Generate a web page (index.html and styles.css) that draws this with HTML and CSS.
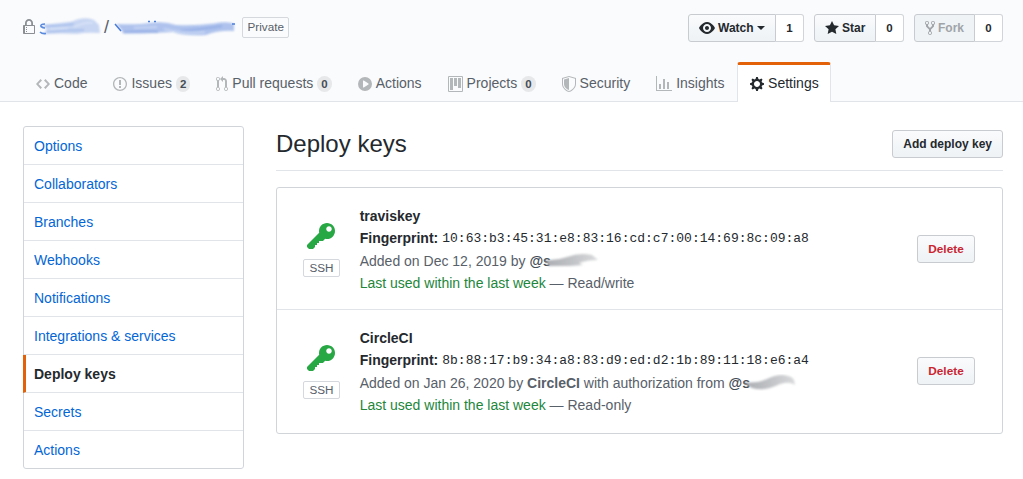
FILE: index.html
```html
<!DOCTYPE html>
<html lang="en">
<head>
<meta charset="utf-8">
<title>Deploy keys</title>
<link rel="stylesheet" href="styles.css">
</head>
<body>
<header class="repohead">
  <div class="repohead-top">
    <h1 class="repo-title">
      <svg class="lock" width="12" height="16" viewBox="0 0 12 16"><path d="M4 13H3v-1h1v1zm8-6v7c0 .55-.45 1-1 1H1c-.55 0-1-.45-1-1V7c0-.55.45-1 1-1h1V4c0-2.2 1.8-4 4-4s4 1.8 4 4v2h1c.55 0 1 .45 1 1zM3.8 6h4.41V4c0-1.22-.98-2.2-2.2-2.2-1.22 0-2.2.98-2.2 2.2v2H3.8zM11 7H2v7h9V7zM4 8H3v1h1V8zm0 2H3v1h1v-1z"/></svg>
      <svg class="owner-smudge" width="64" height="24" viewBox="0 0 64 24">
        <defs>
          <filter id="soft"><feGaussianBlur stdDeviation=".9"/></filter>
          <filter id="crisp"><feGaussianBlur stdDeviation=".5"/></filter>
          <linearGradient id="gray"><stop offset="0" stop-color="#a9acb1"/><stop offset=".6" stop-color="#c4c6c9"/><stop offset="1" stop-color="#d9dadc"/></linearGradient>
        </defs>
        <g filter="url(#soft)">
          <path fill="#c8d6f3" d="M5 10Q20 8 34 6.500Q47 1 56 5L61 10L62 18Q48 17 39 19Q24 18 5 19Q9 16 8 13Z"/>
          <path fill="none" stroke="#a9c0ec" stroke-width="2" d="M9 17Q28 15 46 15M6 11Q25 11 36 9"/>
          <path fill="none" stroke="#dbe5f8" stroke-width="1.500" d="M36 12Q47 7 55 8M12 14L30 13"/>
        </g>
        <path filter="url(#crisp)" fill="none" stroke="#5a8ae0" stroke-width="1.600" d="M7 9Q2 9 3 11.500Q5 13 7 13M2 17Q4 19 8 18.500"/>
      </svg>
      <span class="slash">/</span>
      <svg class="repo-smudge" width="124" height="24" viewBox="0 0 124 24">
        <g filter="url(#soft)">
          <path fill="#aec2ed" d="M2 9Q24 10 36 8Q50 6 62 10Q82 11 100 8.500Q114 6 120 9V16Q105 15 92 20Q70 21 59 17L28 18.500H9Q8 14 2 9Z"/>
          <path fill="none" stroke="#94aee5" stroke-width="2" d="M10 17Q30 16 44 17M66 16Q90 14 108 11"/>
          <path fill="none" stroke="#c6d5f4" stroke-width="2" d="M20 13L43 12M50 14Q70 19 91 17"/>
        </g>
        <path filter="url(#crisp)" fill="none" stroke="#4a7edc" stroke-width="1.500" d="M1 9L7 16M34 6.500h2M40 6.500h2M118 9h3"/>
      </svg>
      <span class="label private">Private</span>
    </h1>
    <div class="actions">
      <div class="btn-group"><button class="btn btn-watch"><svg width="16" height="16" viewBox="0 0 16 16"><path d="M8.06 2C3 2 0 8 0 8s3 6 8.06 6C13 14 16 8 16 8s-3-6-7.94-6zM8 12c-2.2 0-4-1.78-4-4 0-2.2 1.8-4 4-4 2.22 0 4 1.8 4 4 0 2.22-1.78 4-4 4zm2-4c0 1.11-.89 2-2 2-1.11 0-2-.89-2-2 0-1.11.89-2 2-2 1.11 0 2 .89 2 2z"/></svg>Watch<span class="caret"></span></button><a class="count">1</a></div>
      <div class="btn-group"><button class="btn btn-star"><svg width="14" height="16" viewBox="0 0 14 16"><path d="M14 6l-4.9-.64L7 1 4.9 5.36 0 6l3.6 3.26L2.67 14 7 11.67 11.33 14l-.93-4.74L14 6z"/></svg>Star</button><a class="count">0</a></div>
      <div class="btn-group"><button class="btn btn-fork"><svg width="10" height="16" viewBox="0 0 10 16"><path d="M8 1a1.993 1.993 0 00-1 3.72V6L5 8 3 6V4.720A1.993 1.993 0 002 1a1.993 1.993 0 00-1 3.720V6.500l3 3v1.780A1.993 1.993 0 005 15a1.993 1.993 0 001-3.720V9.500l3-3V4.720A1.993 1.993 0 008 1zM2 4.200C1.340 4.200.8 3.650.8 3c0-.65.55-1.200 1.200-1.200.65 0 1.200.55 1.200 1.200 0 .65-.55 1.200-1.200 1.200zm3 10c-.66 0-1.200-.55-1.200-1.200 0-.65.55-1.200 1.200-1.200.65 0 1.200.55 1.200 1.200 0 .65-.55 1.200-1.200 1.200zm3-10c-.66 0-1.200-.55-1.200-1.200 0-.65.55-1.200 1.200-1.200.65 0 1.200.55 1.200 1.200 0 .65-.55 1.200-1.200 1.200z"/></svg>Fork</button><a class="count">0</a></div>
    </div>
  </div>
  <nav class="tabs">
    <a class="tab"><svg width="14" height="16" viewBox="0 0 14 16"><path d="M9.500 3L8 4.500 11.500 8 8 11.500 9.500 13 14 8 9.500 3zm-5 0L0 8l4.500 5L6 11.500 2.500 8 6 4.500 4.500 3z"/></svg>Code</a>
    <a class="tab"><svg width="14" height="16" viewBox="0 0 14 16"><path d="M7 2.300c3.140 0 5.700 2.560 5.700 5.700s-2.560 5.700-5.700 5.700A5.710 5.710 0 011.300 8c0-3.140 2.560-5.700 5.700-5.700zM7 1C3.140 1 0 4.140 0 8s3.140 7 7 7 7-3.140 7-7-3.140-7-7-7zm1 3H6v5h2V4zm0 6H6v2h2v-2z"/></svg>Issues<span class="counter">2</span></a>
    <a class="tab"><svg width="12" height="16" viewBox="0 0 12 16"><path d="M11 11.280V5c-.03-.78-.34-1.470-.94-2.060C9.460 2.350 8.780 2.030 8 2H7V0L4 3l3 3V4h1c.27.02.48.11.69.31.21.2.3.42.31.69v6.280A1.993 1.993 0 0010 15a1.993 1.993 0 001-3.720zm-1 2.920c-.66 0-1.200-.55-1.200-1.200 0-.65.55-1.200 1.200-1.200.65 0 1.200.55 1.200 1.200 0 .65-.55 1.200-1.200 1.200zM4 3c0-1.110-.89-2-2-2a1.993 1.993 0 00-1 3.720v6.560A1.993 1.993 0 002 15a1.993 1.993 0 001-3.720V4.720c.59-.34 1-.98 1-1.720zm-.8 10c0 .66-.55 1.200-1.200 1.200-.65 0-1.200-.55-1.200-1.200 0-.65.55-1.200 1.200-1.200.65 0 1.200.55 1.200 1.200zM2 4.200C1.340 4.200.8 3.650.8 3c0-.65.55-1.200 1.200-1.200.65 0 1.200.55 1.200 1.200 0 .65-.55 1.200-1.200 1.200z"/></svg>Pull requests<span class="counter">0</span></a>
    <a class="tab"><svg width="14" height="16" viewBox="0 0 14 16"><path fill-rule="evenodd" d="M14 8A7 7 0 110 8a7 7 0 0114 0zm-8.223 3.482l4.599-3.066a.5.5 0 000-.832L5.777 4.518A.5.5 0 005 4.934v6.132a.5.5 0 00.777.416z"/></svg>Actions</a>
    <a class="tab"><svg width="15" height="16" viewBox="0 0 15 16"><path fill-rule="evenodd" d="M10 12h3V2h-3v10zm-4-2h3V2H6v8zm-4 4h3V2H2v12zm-1 1h13V1H1v14zM14 0H1a1 1 0 00-1 1v14a1 1 0 001 1h13a1 1 0 001-1V1a1 1 0 00-1-1z"/></svg>Projects<span class="counter">0</span></a>
    <a class="tab"><svg width="14" height="16" viewBox="0 0 14 16"><path fill-rule="evenodd" d="M0 2l7-2 7 2v6.020C14 12.690 8.690 16 7 16c-1.690 0-7-3.310-7-7.980V2zm1 .75L7 1l6 1.750v5.268C13 12.104 8.449 15 7 15c-1.449 0-6-2.896-6-6.982V2.750zm1 .75L7 2v12c-1.207 0-5-2.482-5-5.985V3.500z"/></svg>Security</a>
    <a class="tab"><svg width="16" height="16" viewBox="0 0 16 16"><path d="M16 14v1H0V0h1v14h15zM5 13H3V8h2v5zm4 0H7V3h2v10zm4 0h-2V6h2v7z"/></svg>Insights</a>
    <a class="tab selected"><svg width="14" height="16" viewBox="0 0 14 16"><path fill-rule="evenodd" d="M14 8.770v-1.600l-1.940-.64-.45-1.090.88-1.840-1.130-1.130-1.810.91-1.090-.45-.69-1.920h-1.600l-.63 1.940-1.110.45-1.840-.88-1.130 1.130.91 1.810-.45 1.090L0 7.230v1.590l1.940.64.45 1.090-.88 1.840 1.130 1.130 1.810-.91 1.090.45.69 1.920h1.590l.63-1.940 1.110-.45 1.840.88 1.130-1.130-.92-1.810.47-1.090L14 8.750v.02zM7 11c-1.660 0-3-1.340-3-3s1.340-3 3-3 3 1.340 3 3-1.340 3-3 3z"/></svg>Settings</a>
  </nav>
</header>
<div class="layout">
  <nav class="menu">
    <a>Options</a><a>Collaborators</a><a>Branches</a><a>Webhooks</a><a>Notifications</a><a>Integrations &amp; services</a><a class="current">Deploy keys</a><a>Secrets</a><a>Actions</a>
  </nav>
  <main class="main">
    <div class="subhead"><h2>Deploy keys</h2><button class="btn">Add deploy key</button></div>
    <ul class="keys">
      <li class="key">
        <div class="key-type"><svg class="key-icon" width="28" height="32" viewBox="0 0 14 16"><path fill-rule="evenodd" d="M12.830 2.170C12.080 1.420 11.140 1.030 10 1c-1.130.03-2.080.42-2.830 1.170S6.040 3.860 6.010 5c0 .3.03.59.09.89L0 12v1l1 1h2l1-1v-1h1v-1h1v-1h2l1.090-1.110c.3.08.59.11.91.11 1.140-.03 2.080-.42 2.830-1.170S13.970 6.140 14 5c-.03-1.140-.42-2.080-1.170-2.830zM11 5.380c-.77 0-1.380-.61-1.380-1.380 0-.77.61-1.380 1.380-1.380.77 0 1.380.61 1.380 1.380 0 .77-.61 1.380-1.380 1.380z"/></svg><span class="label">SSH</span></div>
        <div class="key-info">
          <p class="strong">traviskey</p>
          <p><b>Fingerprint:</b><code>10:63:b3:45:31:e8:83:16:cd:c7:00:14:69:8c:09:a8</code></p>
          <p class="muted">Added on Dec 12, 2019 by <span class="at">@s</span><svg class="user-smudge" width="58" height="18" viewBox="0 0 58 18"><g filter="url(#soft)"><path fill="url(#gray)" d="M1 8Q13 9 24 5Q37 0 49 3L55 8Q44 8 36 11L40 13L27 14L5 14Q6 12 1 8Z"/></g></svg></p>
          <p class="muted"><span class="green">Last used within the last week</span> — Read/write</p>
        </div>
        <button class="btn danger">Delete</button>
      </li>
      <li class="key">
        <div class="key-type"><svg class="key-icon" width="28" height="32" viewBox="0 0 14 16"><path fill-rule="evenodd" d="M12.830 2.170C12.080 1.420 11.140 1.030 10 1c-1.130.03-2.080.42-2.830 1.170S6.040 3.860 6.010 5c0 .3.03.59.09.89L0 12v1l1 1h2l1-1v-1h1v-1h1v-1h2l1.090-1.110c.3.08.59.11.91.11 1.140-.03 2.080-.42 2.830-1.170S13.970 6.140 14 5c-.03-1.140-.42-2.080-1.170-2.830zM11 5.380c-.77 0-1.380-.61-1.380-1.380 0-.77.61-1.380 1.380-1.380.77 0 1.380.61 1.380 1.380 0 .77-.61 1.380-1.380 1.380z"/></svg><span class="label">SSH</span></div>
        <div class="key-info">
          <p class="strong">CircleCI</p>
          <p><b>Fingerprint:</b><code>8b:88:17:b9:34:a8:83:d9:ed:d2:1b:89:11:18:e6:a4</code></p>
          <p class="muted">Added on Jan 26, 2020 by <b>CircleCI</b> with authorization from <span class="at">@s</span><svg class="user-smudge" width="58" height="18" viewBox="0 0 58 18"><g filter="url(#soft)"><path fill="url(#gray)" d="M1 8Q14 10 25 5Q37 -1 46 2Q53 3 53 11Q48 7 38 10Q22 18 10 14Q6 12 1 8Z"/></g></svg></p>
          <p class="muted"><span class="green">Last used within the last week</span> — Read-only</p>
        </div>
        <button class="btn danger">Delete</button>
      </li>
    </ul>
  </main>
</div>
</body>
</html>
```
FILE: styles.css
```css
* { box-sizing: border-box; }
body { margin: 0; background: #fff; color: #24292e; font: 14px/21px "Liberation Sans", Arial, sans-serif; }
h1, h2, p, ul { margin: 0; padding: 0; font-weight: 400; }
svg { fill: currentColor; flex: none; }
.repohead { height: 102px; padding: 14px 20px 0 23px; background: #fafbfc; border-bottom: 1px solid #e1e4e8; }
.repohead-top { display: flex; justify-content: space-between; height: 48px; }
.repo-title { display: flex; align-items: center; height: 26px; font-size: 18px; color: #586069; }
.lock { color: #8b8f94; }
.owner-smudge { margin-left: 3px; }
.slash { margin-left: 2px; }
.repo-smudge { margin-left: 5px; }
.label { border: 1px solid #d5d8dc; border-radius: 2px; color: #586069; font-size: 11.700px; line-height: 16px; padding: 0 5px; }
.private { margin-left: 4px; padding: 0 4.500px 1px; line-height: 18px; }
.actions { display: flex; gap: 10px; }
.btn-group { display: flex; }
.btn { display: flex; align-items: center; height: 28px; padding: 0 10px; border: 1px solid #c8cbcf; border-radius: 3px; background: linear-gradient(#fafbfc, #eff3f6 90%); color: #24292e; font: bold 12px/20px "Liberation Sans", Arial, sans-serif; white-space: nowrap; }
.btn svg { margin-right: 3px; }
.btn-group .btn { border-radius: 3px 0 0 3px; }
.btn-watch { width: 88px; }
.btn-star { width: 62px; }
.btn-fork { width: 61px; }
.btn-group .btn-fork { color: #a0a4a8; background: #eff3f6; }
.caret { margin-left: 3px; border: 4px solid transparent; border-top-color: #24292e; border-bottom: 0; }
.count { width: 28px; height: 28px; border: 1px solid #d1d4d8; border-left: 0; border-radius: 0 3px 3px 0; background: #fff; font: bold 11.500px/26px "Liberation Sans", Arial, sans-serif; text-align: center; }
.tabs { display: flex; height: 40px; }
.tab { display: flex; align-items: center; height: 40px; padding: 2px 12px 0; border: 1px solid transparent; border-bottom: 0; color: #586069; white-space: nowrap; }
.tab svg { margin-right: 4px; color: #b4b7ba; }
.tab.selected { padding: 0 11.700px; border: 1px solid #e1e4e8; border-top: 3px solid #e36209; border-bottom: 0; border-radius: 3px 3px 0 0; background: #fff; color: #24292e; }
.tab.selected svg { color: #24292e; }
.counter { margin: 1px 0 0 4px; padding: 2px 4px; border-radius: 20px; background: #e6e8ea; color: #444d56; font-size: 11.500px; font-weight: bold; line-height: 12px; }
.layout { display: flex; gap: 32px; padding: 24px 20px 0 23px; }
.menu { width: 221px; height: 343px; border: 1px solid #d1d5da; border-radius: 3px; color: #0366d6; }
.menu a { display: block; height: 38px; padding: 9px 10px 7px; border-bottom: 1px solid #e1e4e8; }
.menu a:last-child { border-bottom: 0; }
.menu a.current { margin-left: -1px; padding-left: 8px; border-left: 3px solid #e36209; color: #24292e; font-weight: bold; }
.main { flex: 1; }
.subhead { display: flex; justify-content: space-between; align-items: flex-start; height: 45px; border-bottom: 1px solid #e1e4e8; }
.subhead h2 { font-size: 24px; line-height: 36px; }
.subhead .btn { margin-top: 4px; }
.keys { margin-top: 16px; border: 1px solid #d1d5da; border-radius: 3px; list-style: none; }
.key { display: flex; align-items: center; height: 123px; padding: 0 27px 1.500px 26px; }
.key:first-child { height: 122px; padding-bottom: 0; border-bottom: 1px solid #e1e4e8; }
.key-type { display: flex; flex-direction: column; align-items: center; gap: 6px; width: 37px; }
.key-icon { margin-right: 1px; color: #28a745; }
.key-info { flex: 1; margin: 0 0 0 19.700px; padding-top: 2.400px; line-height: 22.500px; }
.key-info p { display: flex; height: 22.500px; white-space: pre; }
.strong { font-weight: bold; }
.key-info code { margin-left: 4px; font: 13px/24px "Liberation Mono", monospace; }
.muted { color: #586069; }
.green { color: #22863a; }
.at { color: #444d56; font-weight: bold; }
.user-smudge { margin: 2px 0 0 -8px; }
.danger { width: 58px; justify-content: center; color: #cb2431; font-size: 11.800px; }
```
